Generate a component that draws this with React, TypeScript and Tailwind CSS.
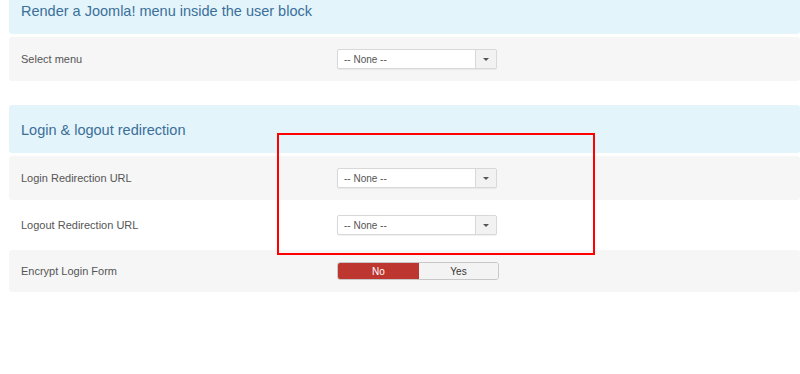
import React from "react";

function SelectBox() {
  return (
    <div className="flex h-[20px] w-[160px] rounded-[2px] border border-[#d8d8d8] bg-white shadow-[0_1px_1px_rgba(0,0,0,0.06)]">
      <div className="flex flex-1 items-center pl-[6px] text-[10px] text-[#555]">-- None --</div>
      <div className="flex w-[21px] items-center justify-center border-l border-[#d8d8d8] bg-[#f2f2f2]">
        <span className="block h-0 w-0 border-x-[3px] border-t-[3px] border-x-transparent border-t-[#555]" />
      </div>
    </div>
  );
}

function Toggle() {
  return (
    <div className="flex h-[18px] w-[162px] overflow-hidden rounded-[3px] border border-[#c8c8c8] text-[10px]">
      <div className="flex w-[81px] items-center justify-center bg-[#bd362f] text-white">No</div>
      <div className="flex flex-1 items-center justify-center bg-[#f3f3f3] text-[#333]">Yes</div>
    </div>
  );
}

function Header({ title, extra }: { title: string; extra?: string }) {
  return (
    <div className={`flex h-[48px] items-center rounded-[3px] bg-[#e3f4fb] px-[12px] pt-[3px] text-[14.5px] text-[#3b6f99] ${extra ?? ""}`}>
      {title}
    </div>
  );
}

function Row({ label, shaded, h, children }: { label: string; shaded: boolean; h: string; children: React.ReactNode }) {
  return (
    <div className={`flex items-center rounded-[3px] ${h} ${shaded ? "bg-[#f6f6f6]" : ""}`}>
      <div className="w-[328px] pl-[12px] text-[11px] text-[#555]">{label}</div>
      {children}
    </div>
  );
}

export default function App() {
  return (
    <div className="relative h-[374px] w-[800px] overflow-hidden bg-white" style={{ fontFamily: '"Liberation Sans", Arial, sans-serif' }}>
      <div className="ml-[9px] flex flex-col">
        <Header title="Render a Joomla! menu inside the user block" extra="-mt-[14px]" />
        <div className="mt-[3px]">
          <Row label="Select menu" shaded h="h-[44px]">
            <SelectBox />
          </Row>
        </div>
        <div className="mt-[24px]">
          <Header title="Login & logout redirection" />
        </div>
        <div className="mt-[3px]">
          <Row label="Login Redirection URL" shaded h="h-[44px]">
            <SelectBox />
          </Row>
          <Row label="Logout Redirection URL" shaded={false} h="h-[50px]">
            <SelectBox />
          </Row>
          <Row label="Encrypt Login Form" shaded h="h-[42px]">
            <Toggle />
          </Row>
        </div>
      </div>
      <div className="absolute left-[277px] top-[133px] h-[122px] w-[318px] border-2 border-[#ff0000]" />
    </div>
  );
}
